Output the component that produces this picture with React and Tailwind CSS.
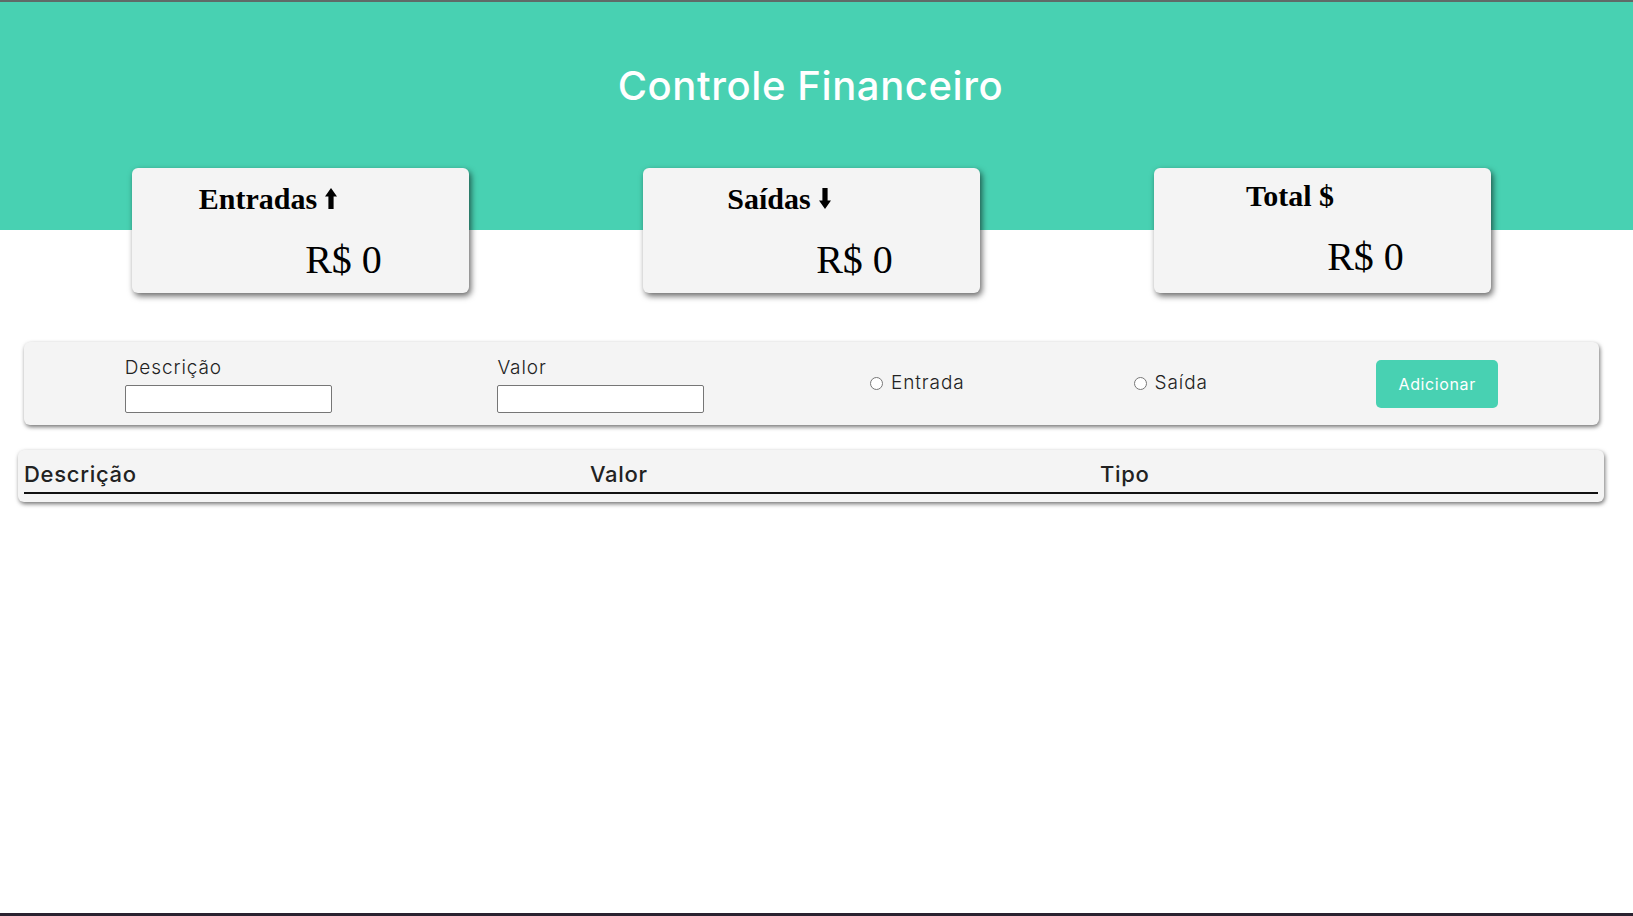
import React, { useState } from 'react';

const ArrowUp = () => (
  <svg width="12" height="21" viewBox="0 0 12 21" className="inline-block ml-[8px] align-baseline">
    <path d="M6 0 L12 8.5 L8.6 8.5 L8.6 21 L3.4 21 L3.4 8.5 L0 8.5 Z" fill="#000" />
  </svg>
);

const ArrowDown = () => (
  <svg width="12" height="21" viewBox="0 0 12 21" className="inline-block ml-[8px] align-baseline">
    <path d="M6 21 L12 12.5 L8.6 12.5 L8.6 0 L3.4 0 L3.4 12.5 L0 12.5 Z" fill="#000" />
  </svg>
);

const ResumeCard = ({ title, icon, value, titleTop }) => {
  return (
    <div className="w-[337px] h-[125px] bg-[#f4f4f4] rounded-[6px] shadow-[2px_3px_6px_rgba(0,0,0,0.6)] font-['Liberation_Serif',serif] text-black">
      {/* titulo centralizado um pouco pra esquerda, igual o original */}
      <div className={`w-[272px] text-center text-[30px] font-bold leading-none h-[30px] ${titleTop}`}>
        {title}
        {icon}
      </div>
      <div className="w-full pl-[86px] text-center text-[40px] leading-none mt-[26px]">R$ {value}</div>
    </div>
  );
};

const App = () => {
  const [desc, setDesc] = useState('');
  const [amount, setAmount] = useState('');
  const [tipo, setTipo] = useState('');

  return (
    <div className="h-[916px] flex flex-col bg-white overflow-hidden font-['Inter',sans-serif] text-[#222]">
      <div className="h-[2px] bg-[#5f6b68]"></div>
      <div className="flex-1">
        <header className="h-[228px] bg-[#48d1b2] pt-[64px] pr-[12px]">
          <h1 className="text-center text-white text-[40px] font-medium leading-none tracking-[0.6px]">Controle Financeiro</h1>
        </header>

        <div className="flex gap-[174px] pl-[132px] -mt-[62px]">
          <ResumeCard title="Entradas" icon={<ArrowUp />} value={0} titleTop="mt-[16px]" />
          <ResumeCard title="Saídas" icon={<ArrowDown />} value={0} titleTop="mt-[16px]" />
          <ResumeCard title="Total $" value={0} titleTop="mt-[13px]" />
        </div>

        <div className="ml-[24px] w-[1575px] h-[83px] mt-[49px] bg-[#f4f4f4] rounded-[6px] shadow-[1px_2px_4px_rgba(0,0,0,0.55)] px-[18px] flex justify-around items-center">
          <div className="w-[207px] flex flex-col">
            <label className="text-[19px] leading-[27px] font-light tracking-[0.9px] text-[#222]">Descrição</label>
            <input
              value={desc}
              onChange={(e) => setDesc(e.target.value)}
              className="mt-[4px] h-[28px] w-[207px] bg-white border border-[#767676] rounded-[2px] outline-none px-1"
            />
          </div>
          <div className="w-[207px] flex flex-col">
            <label className="text-[19px] leading-[27px] font-light tracking-[0.9px] text-[#222]">Valor</label>
            <input
              type="number"
              value={amount}
              onChange={(e) => setAmount(e.target.value)}
              className="mt-[4px] h-[28px] w-[207px] bg-white border border-[#767676] rounded-[2px] outline-none px-1"
            />
          </div>
          <div className="w-[98px] flex items-center whitespace-nowrap">
            <input type="radio" name="tipo" id="rIncome" checked={tipo === 'in'} onChange={() => setTipo('in')} className="m-0 w-[13px] h-[13px]" />
            <label htmlFor="rIncome" className="ml-[8px] text-[19px] font-light tracking-[0.9px] text-[#222]">Entrada</label>
          </div>
          <div className="w-[77px] flex items-center whitespace-nowrap">
            <input type="radio" name="tipo" id="rExpenses" checked={tipo === 'out'} onChange={() => setTipo('out')} className="m-0 w-[13px] h-[13px]" />
            <label htmlFor="rExpenses" className="ml-[8px] text-[19px] font-light tracking-[0.9px] text-[#222]">Saída</label>
          </div>
          <button className="w-[122px] h-[48px] bg-[#48d1b2] text-white text-[16px] tracking-[0.6px] rounded-[5px]">Adicionar</button>
        </div>

        <div className="ml-[18px] w-[1586px] mt-[25px] bg-[#f4f4f4] rounded-[6px] shadow-[1px_2px_4px_rgba(0,0,0,0.55)] px-[6px] pt-[8px] pb-[8px]">
          <table className="w-full border-collapse">
            <thead>
              <tr className="border-b-2 border-[#111]">
                <th className="w-[566px] text-left text-[22px] font-medium tracking-[0.7px] leading-[32px] pb-[2px] p-0">Descrição</th>
                <th className="w-[510px] text-left text-[22px] font-medium tracking-[0.7px] leading-[32px] pb-[2px] p-0">Valor</th>
                <th className="text-left text-[22px] font-medium tracking-[0.7px] leading-[32px] pb-[2px] p-0">Tipo</th>
              </tr>
            </thead>
            <tbody></tbody>
          </table>
        </div>
      </div>
      <div className="h-[3px] bg-[#2a2230]"></div>
    </div>
  );
};

export default App;
